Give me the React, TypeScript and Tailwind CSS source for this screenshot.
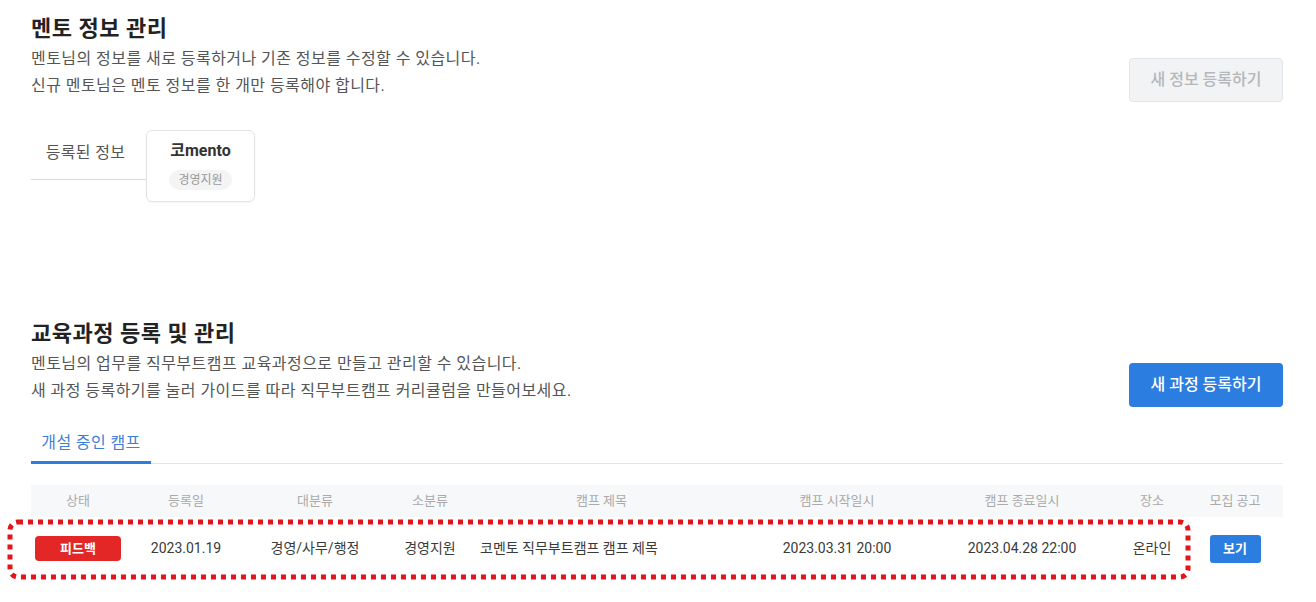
import React from 'react';

const COLS = 'grid grid-cols-[94px_122px_136px_94px_249px_222px_148px_112px_54px]';

const HEADERS = ['상태', '등록일', '대분류', '소분류', '캠프 제목', '캠프 시작일시', '캠프 종료일시', '장소', '모집 공고'];

const CAMPS = [
  {
    id: 1,
    createdAt: '2023.01.19',
    category: '경영/사무/행정',
    subCategory: '경영지원',
    title: '코멘토 직무부트캠프 캠프 제목',
    startAt: '2023.03.31 20:00',
    endAt: '2023.04.28 22:00',
    place: '온라인',
  },
];

function SectionHead({ title, lines, action, disabled }: { title: string; lines: string[]; action: string; disabled?: boolean }) {
  return (
    <div className="flex items-start justify-between">
      <div>
        <h2 className="text-[22px] leading-[30px] font-bold text-[#222] tracking-[0.5px]">{title}</h2>
        <div className="mt-[1px] text-[16px] leading-[27px] text-[#555] tracking-[0.45px]">
          {lines.map((l) => (
            <p key={l}>{l}</p>
          ))}
        </div>
      </div>
      <button
        className={`mt-[44px] w-[154px] h-[44px] rounded-[4px] text-[16px] font-medium ${
          disabled
            ? 'bg-[#f1f3f5] border border-[#e2e5e8] text-[#b3b7bc]'
            : 'bg-[#2c7de0] text-white'
        }`}
      >
        {action}
      </button>
    </div>
  );
}

export default function App() {
  return (
    <div className="relative w-[1316px] h-[602px] bg-white overflow-hidden pl-[31px] pr-[33px] pt-[14px] font-[family-name:Roboto,'Noto_Sans_CJK_KR',sans-serif]">
      {/* 멘토 정보 */}
      <SectionHead
        title="멘토 정보 관리"
        lines={['멘토님의 정보를 새로 등록하거나 기존 정보를 수정할 수 있습니다.', '신규 멘토님은 멘토 정보를 한 개만 등록해야 합니다.']}
        action="새 정보 등록하기"
        disabled
      />

      <div className="mt-[28px] flex items-start">
        <div className="w-[115px] h-[50px] border-b border-[#dcdcdc] flex items-center justify-center pb-[4px] pr-[6px] text-[16px] tracking-[0.3px] text-[#555]">
          등록된 정보
        </div>
        <div className="w-[109px] h-[72px] border border-[#e3e3e3] rounded-[6px] flex flex-col items-center pt-[8px] shadow-[0_1px_2px_rgba(0,0,0,0.04)]">
          <span className="text-[16px] leading-[24px] font-bold text-[#333]">코mento</span>
          <span className="mt-[7px] px-[9px] h-[20px] leading-[20px] rounded-full bg-[#f4f4f5] text-[12px] text-[#999]">경영지원</span>
        </div>
      </div>

      {/* 교육과정 */}
      <div className="mt-[117px]">
        <SectionHead
          title="교육과정 등록 및 관리"
          lines={['멘토님의 업무를 직무부트캠프 교육과정으로 만들고 관리할 수 있습니다.', '새 과정 등록하기를 눌러 가이드를 따라 직무부트캠프 커리큘럼을 만들어보세요.']}
          action="새 과정 등록하기"
        />
      </div>

      <div className="mt-[24px] flex border-b border-[#e3e3e3]">
        <div className="w-[120px] -mb-px border-b-[3px] border-[#2c7de0] pb-[6px] text-center text-[16px] tracking-[0.4px] leading-[24px] text-[#3f7fd8]">
          개설 중인 캠프
        </div>
      </div>

      <div className="mt-[21px]">
        <div className={`${COLS} h-[32px] items-center bg-[#f7f8f9] text-[13px] text-[#aaa]`}>
          {HEADERS.map((h) => (
            <div key={h} className="text-center">
              {h}
            </div>
          ))}
        </div>
        {CAMPS.map((c) => (
          <div key={c.id} className={`${COLS} h-[63px] items-center text-[14px] text-[#3a3a3a]`}>
            <div className="flex justify-center">
              <span className="w-[86px] h-[25px] rounded-[4px] bg-[#e32727] text-white text-[13px] font-bold flex items-center justify-center">
                피드백
              </span>
            </div>
            <div className="text-center">{c.createdAt}</div>
            <div className="text-center">{c.category}</div>
            <div className="text-center">{c.subCategory}</div>
            <div className="pl-[3px]">{c.title}</div>
            <div className="text-center">{c.startAt}</div>
            <div className="text-center">{c.endAt}</div>
            <div className="text-center">{c.place}</div>
            <div className="flex justify-center">
              <button className="w-[51px] h-[28px] rounded-[3px] bg-[#2c7de0] text-white text-[13px] font-bold">보기</button>
            </div>
          </div>
        ))}
      </div>

      {/* highlight annotation */}
      <svg className="absolute left-0 top-0 pointer-events-none" width="1316" height="602">
        <rect x="10" y="522" width="1178" height="55" rx="8" fill="none" stroke="#e4141b" strokeWidth="5" strokeDasharray="5 5" />
      </svg>
    </div>
  );
}
